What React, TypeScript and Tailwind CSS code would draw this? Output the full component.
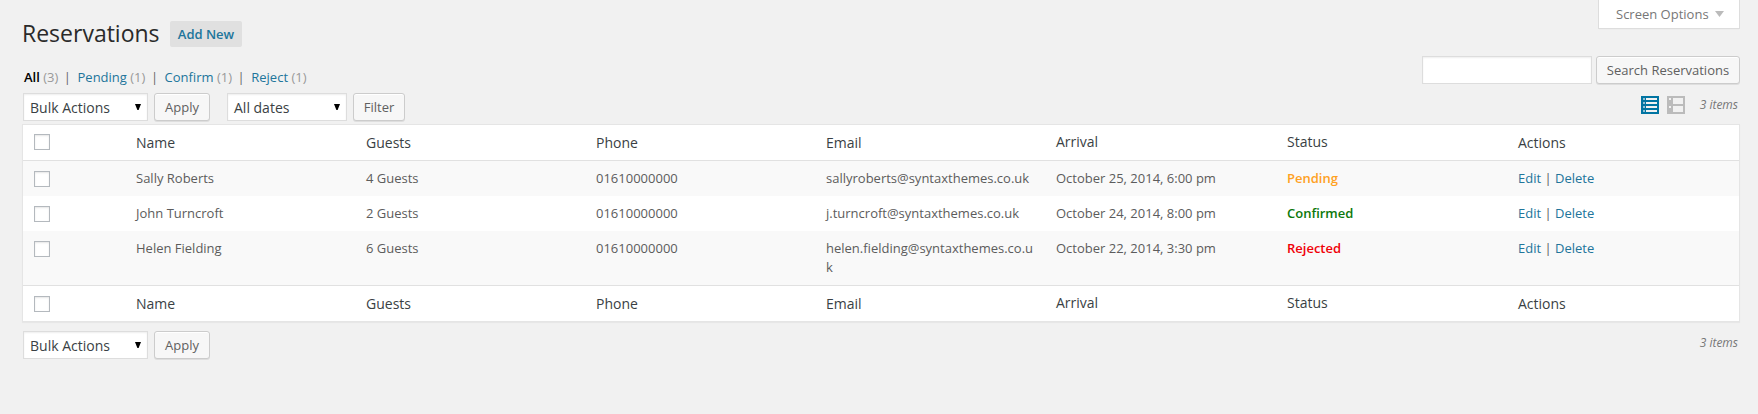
import type { ReactNode } from "react";

const COLS = "grid grid-cols-[103px_230px_230px_230px_230px_231px_231px_minmax(0,1fr)]";
const HEADINGS = ["Name", "Guests", "Phone", "Email", "Arrival", "Status", "Actions"];

const ROWS = [
  { name: "Sally Roberts", guests: "4 Guests", phone: "01610000000", email: "sallyroberts@syntaxthemes.co.uk", arrival: "October 25, 2014, 6:00 pm", status: "Pending", color: "text-[#ffa11f]", row: "h-[35px] bg-[#f9f9f9]" },
  { name: "John Turncroft", guests: "2 Guests", phone: "01610000000", email: "j.turncroft@syntaxthemes.co.uk", arrival: "October 24, 2014, 8:00 pm", status: "Confirmed", color: "text-[#0b780b]", row: "h-[35px] bg-white" },
  { name: "Helen Fielding", guests: "6 Guests", phone: "01610000000", email: "helen.fielding@syntaxthemes.co.uk", arrival: "October 22, 2014, 3:30 pm", status: "Rejected", color: "text-[#f00008]", row: "h-[54px] bg-[#f9f9f9]" },
];

const VIEWS = [
  { label: "All", count: 3 },
  { label: "Pending", count: 1 },
  { label: "Confirm", count: 1 },
  { label: "Reject", count: 1 },
];

function Checkbox({ className = "" }: { className?: string }) {
  return (
    <input
      type="checkbox"
      className={`ml-[11px] block size-4 appearance-none border border-[#b4b9be] bg-white shadow-[inset_0_1px_2px_rgba(0,0,0,0.1)] ${className}`}
    />
  );
}

function Button({ children, className = "" }: { children: ReactNode; className?: string }) {
  return (
    <button
      className={`h-7 rounded-[3px] border border-[#ccc] bg-[#f7f7f7] text-center text-[13px] leading-[26px] text-[#606060] shadow-[inset_0_1px_0_#fff,0_1px_0_rgba(0,0,0,0.08)] ${className}`}
    >
      {children}
    </button>
  );
}

function Select({ label, className = "" }: { label: string; className?: string }) {
  return (
    <button
      className={`flex h-7 items-center justify-between border border-[#ddd] bg-white pl-[6px] pr-[6px] text-[14px] leading-[26px] text-[#3a3f44] shadow-[inset_0_1px_2px_rgba(0,0,0,0.07)] ${className}`}
    >
      <span className="whitespace-nowrap pt-px">{label}</span>
      <svg width="6" height="6" viewBox="0 0 6 6" className="mb-px">
        <path d="M0 0h6L3.6 6H2.4z" fill="#000" />
      </svg>
    </button>
  );
}

function HeadRow({ checkboxClass }: { checkboxClass: string }) {
  return (
    <div className={`${COLS} h-[35px] bg-white text-[14px] leading-[19px] text-[#3a3f44]`}>
      <Checkbox className={checkboxClass} />
      {HEADINGS.map((h) => (
        <div key={h} className={h === "Arrival" || h === "Status" ? "pl-[10px] pt-[7px]" : "pl-[10px] pt-2"}>
          {h}
        </div>
      ))}
    </div>
  );
}

export default function App() {
  return (
    <div className="h-[414px] w-[1758px] overflow-hidden bg-[#f1f1f1] pl-[22px] pr-[18px] font-['Open_Sans',sans-serif] text-[13px] text-[#5c5c5c]">
      <div className="flex h-14 justify-between">
        <div className="flex pt-[21px]">
          <h1 className="-mt-px w-[148px] whitespace-nowrap text-[23px] leading-[26px] text-[#2a2a2a]">Reservations</h1>
          <a className="h-[26px] w-[72px] rounded-[2px] bg-[#e0e0e0] text-center text-[13px] font-semibold leading-[26px] text-[#21759b]">Add New</a>
        </div>
        <button className="flex h-[29px] w-[142px] items-center border border-t-0 border-[#ddd] bg-white pb-px pl-[17px] text-[13px] text-[#777] shadow-[0_1px_1px_-1px_rgba(0,0,0,0.1)]">
          <span className="pt-[2px]">Screen Options</span>
          <svg width="9" height="6" viewBox="0 0 9 6" className="ml-[6px]">
            <path d="M0 0h9L4.5 6z" fill="#bbb" />
          </svg>
        </button>
      </div>

      <div className="flex h-[37px] justify-between">
        <ul className="flex pl-[2px] pt-[11px] leading-[20px]">
          {VIEWS.map((v, i) => (
            <li key={v.label} className="flex whitespace-pre">
              <a className={i === 0 ? "font-semibold text-black" : "text-[#21759b]"}>{v.label}</a>
              <span className="text-[#999]"> ({v.count})</span>
              {i < 3 && <span className="w-[19.2px] pl-[5.5px] text-[#666]">|</span>}
            </li>
          ))}
        </ul>
        <div className="flex gap-1">
          <input className="h-7 w-[170px] border border-[#ddd] bg-white shadow-[inset_0_1px_2px_rgba(0,0,0,0.07)]" />
          <Button className="w-36">Search Reservations</Button>
        </div>
      </div>

      <div className="flex h-[31px] justify-between pl-px">
        <div className="flex">
          <Select label="Bulk Actions" className="w-[125px]" />
          <Button className="ml-[6px] w-14">Apply</Button>
          <Select label="All dates" className="ml-[17px] w-[120px]" />
          <Button className="ml-[6px] w-[52px]">Filter</Button>
        </div>
        <div className="flex pt-[3px]">
          <svg width="18" height="18" viewBox="0 0 18 18">
            <path d="M0 0h18v18H0z" fill="#0074a2" />
            <path d="M2 2h2v2H2zM2 6h2v2H2zM2 10h2v2H2zM2 14h2v2H2z" fill="#8fc0d5" />
            <path d="M5 2h11v2H5zM5 6h11v2H5zM5 10h11v2H5zM5 14h11v2H5z" fill="#f1f1f1" />
          </svg>
          <svg width="18" height="18" viewBox="0 0 18 18" className="ml-2">
            <path d="M0 0h18v18H0z" fill="#bbb" />
            <path d="M2 2h2v2H2zM6 2h10v6H6zM2 10h2v2H2zM6 10h10v6H6z" fill="#f1f1f1" />
          </svg>
          <span className="ml-[15px] mr-[2px] whitespace-nowrap text-[12px] italic leading-[18px] text-[#777]">3 items</span>
        </div>
      </div>

      <div className="border border-[#e5e5e5] bg-white shadow-[0_1px_1px_rgba(0,0,0,0.04)]">
        <HeadRow checkboxClass="mt-[9px]" />
        <div className="border-y border-[#e1e1e1]">
          {ROWS.map((r) => (
            <div key={r.name} className={`${COLS} ${r.row} leading-[19px]`}>
              <Checkbox className="mt-[10px]" />
              <div className="pl-[10px] pt-2">{r.name}</div>
              <div className="pl-[10px] pt-2">{r.guests}</div>
              <div className="pl-[10px] pt-2">{r.phone}</div>
              <div className="break-all px-[10px] pt-2">{r.email}</div>
              <div className="whitespace-nowrap pl-[10px] pt-2">{r.arrival}</div>
              <div className={`pl-[10px] pt-2 font-semibold ${r.color}`}>{r.status}</div>
              <div className="pl-[10px] pt-2">
                <a className="text-[#21759b]">Edit</a> | <a className="text-[#21759b]">Delete</a>
              </div>
            </div>
          ))}
        </div>
        <HeadRow checkboxClass="mt-[10px]" />
      </div>

      <div className="flex justify-between pl-px pt-[9px]">
        <div className="flex">
          <Select label="Bulk Actions" className="w-[125px]" />
          <Button className="ml-[6px] w-14">Apply</Button>
        </div>
        <span className="mr-[2px] pt-[3px] text-[12px] italic leading-[18px] text-[#777]">3 items</span>
      </div>
    </div>
  );
}
